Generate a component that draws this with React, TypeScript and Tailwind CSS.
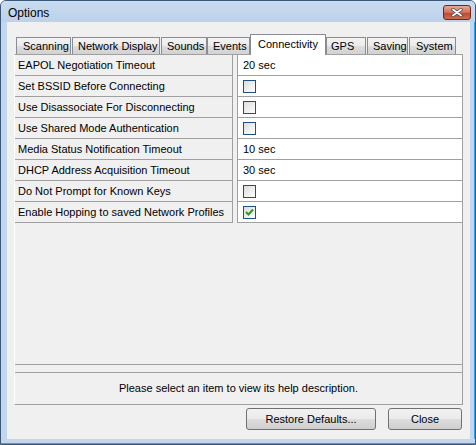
import React from 'react';

type Row = { label: string; value?: string; checked?: boolean };

const rows: Row[] = [
  { label: 'EAPOL Negotiation Timeout', value: '20 sec' },
  { label: 'Set BSSID Before Connecting', checked: false },
  { label: 'Use Disassociate For Disconnecting', checked: false },
  { label: 'Use Shared Mode Authentication', checked: false },
  { label: 'Media Status Notification Timeout', value: '10 sec' },
  { label: 'DHCP Address Acquisition Timeout', value: '30 sec' },
  { label: 'Do Not Prompt for Known Keys', checked: false },
  { label: 'Enable Hopping to saved Network Profiles', checked: true },
];

const tabs = [
  { label: 'Scanning', cls: 'w-[55px] ml-0 pl-[6px]' },
  { label: 'Network Display', cls: 'w-[88px] ml-[1px] pl-[5px]' },
  { label: 'Sounds', cls: 'w-[46px] ml-[1px] pl-[5px]' },
  { label: 'Events', cls: 'w-[43px] ml-0 pl-[5px]' },
  { label: 'Connectivity', cls: 'w-[76px] ml-0 pl-[7px]', active: true },
  { label: 'GPS', cls: 'w-[40px] ml-0 pl-[4px]' },
  { label: 'Saving', cls: 'w-[41px] ml-[1px] pl-[5px]' },
  { label: 'System', cls: 'w-[47px] ml-[1px] pl-[6px]' },
];

function Checkbox({ checked }: { checked: boolean }) {
  return (
    <div className="flex h-[13px] w-[13px] items-center justify-center border border-[#1c5180] bg-[linear-gradient(135deg,#dcdcdc,#ffffff)]">
      {checked && (
        <svg width="9" height="8" viewBox="0 0 9 8">
          <path d="M1 4 L3.5 6.5 L8 1.5" fill="none" stroke="#21a121" strokeWidth="2" />
        </svg>
      )}
    </div>
  );
}

function CloseButton() {
  return (
    <div className="mr-[4px] mt-[4px] flex h-[15px] w-[28px] items-center justify-center rounded-[3px] border border-[#6b2a1c] bg-[linear-gradient(to_bottom,#e9a996,#d0705a_50%,#c0462c_51%,#d26a4e)]">
      <svg width="12" height="9" viewBox="0 0 12 9">
        <path d="M2 1.5 L10 7.5 M10 1.5 L2 7.5" stroke="#4a4a4a" strokeWidth="3.4" strokeLinecap="round" />
        <path d="M2 1.5 L10 7.5 M10 1.5 L2 7.5" stroke="#ffffff" strokeWidth="1.8" strokeLinecap="round" />
      </svg>
    </div>
  );
}

function Button({ label, width }: { label: string; width: string }) {
  return (
    <button
      type="button"
      className={`${width} h-[22px] rounded-[3px] border border-[#707070] bg-[linear-gradient(to_bottom,#f2f2f2,#ebebeb_50%,#dddddd_51%,#cfcfcf)] text-[11px] text-black`}
    >
      {label}
    </button>
  );
}

export default function App() {
  return (
    <div
      className="flex h-[445px] w-[476px] flex-col rounded-t-[6px] border border-[#3c5879] bg-[#c2d6ee] text-[11px] text-black"
      style={{ fontFamily: '"Liberation Sans", Arial, sans-serif' }}
    >
      {/* title bar */}
      <div className="flex h-[21px] items-start justify-between rounded-t-[5px] bg-[linear-gradient(to_bottom,#c9dcf0,#bcd2ea)]">
        <span className="ml-[7px] mt-[4px] text-[12px] leading-[16px]">Options</span>
        <CloseButton />
      </div>

      <div className="flex flex-1">
        <div className="w-[6px]" />
        {/* client area */}
        <div className="flex w-[463px] flex-col bg-[#f0f0f0] px-[7px] pt-[12px]">
          {/* tabs */}
          <div className="flex h-[20px] items-end pl-[2px]">
            {tabs.map((t) =>
              t.active ? (
                <div
                  key={t.label}
                  className={`${t.cls} relative z-10 -mb-px h-[21px] border border-b-0 border-[#898c95] bg-white pt-[2px] leading-[14px]`}
                >
                  {t.label}
                </div>
              ) : (
                <div
                  key={t.label}
                  className={`${t.cls} h-[17px] border border-b-0 border-[#898c95] bg-[linear-gradient(to_bottom,#f3f3f3,#ebebeb_50%,#dddddd_51%,#d2d2d2)] pt-[1px] leading-[14px]`}
                >
                  {t.label}
                </div>
              ),
            )}
          </div>

          {/* panel */}
          <div className="flex h-[351px] w-[449px] flex-col border border-l-white border-r-[#a0a0a0] border-t-[#a0a0a0] border-b-[#a0a0a0]">
            <div className="h-[310px] border-b border-[#a0a0a0]">
              {rows.map((r) => (
                <div key={r.label} className="flex h-[21px]">
                  <div className="flex w-[218px] items-center border-b border-r border-[#a0a0a0] bg-[#f0f0f0] pl-[3px]">
                    {r.label}
                  </div>
                  <div className="w-[4px]" />
                  <div className="flex w-[225px] items-center border-b border-l border-[#a0a0a0] bg-white pl-[5px]">
                    {r.value ?? <Checkbox checked={!!r.checked} />}
                  </div>
                </div>
              ))}
            </div>
            <div className="h-[7px]" />
            <div className="flex flex-1 items-center justify-center border-t border-[#a0a0a0]">
              Please select an item to view its help description.
            </div>
          </div>

          {/* buttons */}
          <div className="mt-[3px] flex justify-end gap-[12px] pr-px">
            <Button label="Restore Defaults..." width="w-[130px]" />
            <Button label="Close" width="w-[74px]" />
          </div>
        </div>
        <div className="w-[5px] border-r border-[#3aa0e6]" />
      </div>

      <div className="h-[5px] border-b border-[#3aa0e6]" />
    </div>
  );
}
